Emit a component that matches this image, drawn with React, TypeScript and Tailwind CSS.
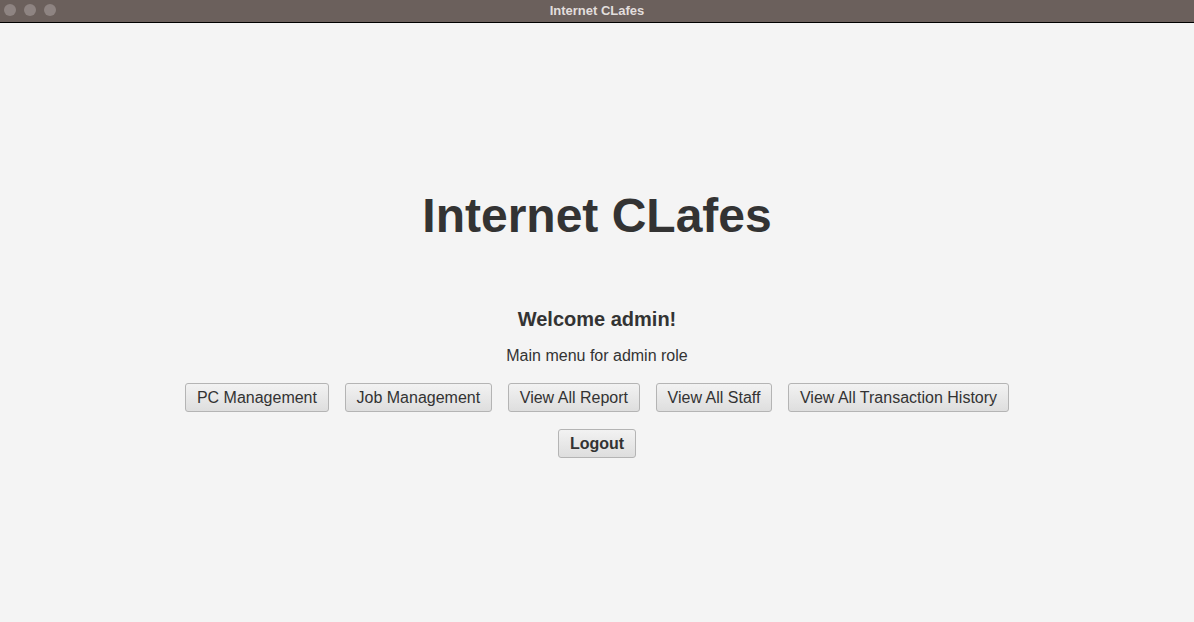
import React from 'react';

const menuItems = [
  'PC Management',
  'Job Management',
  'View All Report',
  'View All Staff',
  'View All Transaction History',
];

function MenuButton({ label, bold }: { label: string; bold?: boolean }) {
  return (
    <button
      className={`h-[29px] px-[10.8px] rounded-[3px] border border-[#b4b4b4] bg-gradient-to-b from-[#f2f2f2] to-[#dedede] text-[16px] leading-none text-[#333333] ${
        bold ? 'font-bold' : ''
      }`}
    >
      {label}
    </button>
  );
}

export default function App() {
  return (
    <div className="w-[1194px] h-[622px] flex flex-col bg-[#f4f4f4] font-['Liberation_Sans',Arial,sans-serif]">
      <div className="relative h-[23px] shrink-0 bg-[#6b605c] border-b border-black flex items-center justify-center">
        <div className="absolute left-[4px] top-[4px] flex gap-[8px]">
          <span className="w-[12px] h-[12px] rounded-full bg-[#8e8482]" />
          <span className="w-[12px] h-[12px] rounded-full bg-[#8e8482]" />
          <span className="w-[12px] h-[12px] rounded-full bg-[#8e8482]" />
        </div>
        <span className="text-[13px] font-bold text-[#e2dedc]">Internet CLafes</span>
      </div>

      <div className="flex-1 flex flex-col items-center">
        <h1 className="mt-[169px] text-[48px] leading-none font-bold text-[#333333]">Internet CLafes</h1>
        <h2 className="mt-[69px] text-[20px] leading-none font-bold text-[#333333]">Welcome admin!</h2>
        <p className="mt-[19px] text-[16px] leading-none text-[#333333]">Main menu for admin role</p>
        <div className="mt-[19px] flex gap-[16px]">
          {menuItems.map((item) => (
            <MenuButton key={item} label={item} />
          ))}
        </div>
        <div className="mt-[17px]">
          <MenuButton label="Logout" bold />
        </div>
      </div>
    </div>
  );
}
